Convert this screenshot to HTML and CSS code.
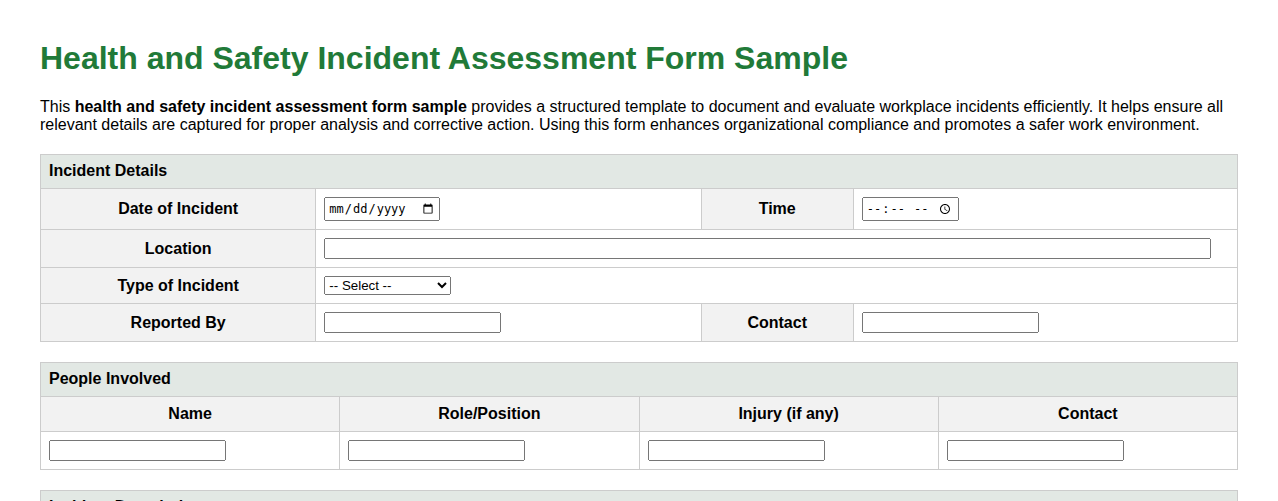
FILE: index.html
```html
<!DOCTYPE html>
<html lang="en">
  <head>
    <meta charset="UTF-8" />
    <meta name="viewport" content="width=device-width, initial-scale=1.0" />
    <title>Health and Safety Incident Assessment Form Sample</title>
    <link rel="stylesheet" href="styles.css">
  </head>
  <body>
    <h1 class="title">Health and Safety Incident Assessment Form Sample</h1>

    <p class="intro">
      This <strong>health and safety incident assessment form sample</strong> provides a structured template to document and evaluate workplace incidents efficiently. It helps ensure all relevant details are captured for proper analysis and corrective action. Using this form enhances organizational compliance and promotes a safer work environment.
    </p>

    <table class="form-table details">
      <colgroup>
        <col class="c-label" />
        <col class="c-value" />
        <col class="c-label2" />
        <col />
      </colgroup>
      <tr>
        <th class="section" colspan="4">Incident Details</th>
      </tr>
      <tr>
        <th>Date of Incident</th>
        <td><input type="date" class="date" /></td>
        <th>Time</th>
        <td><input type="time" class="time" /></td>
      </tr>
      <tr>
        <th>Location</th>
        <td colspan="3"><input type="text" class="wide" /></td>
      </tr>
      <tr>
        <th>Type of Incident</th>
        <td colspan="3">
          <select>
            <option>-- Select --</option>
            <option>Injury</option>
            <option>Near Miss</option>
            <option>Property Damage</option>
            <option>Environmental</option>
          </select>
        </td>
      </tr>
      <tr>
        <th>Reported By</th>
        <td><input type="text" /></td>
        <th>Contact</th>
        <td><input type="text" /></td>
      </tr>
    </table>

    <table class="form-table people">
      <tr>
        <th class="section" colspan="4">People Involved</th>
      </tr>
      <tr>
        <th>Name</th>
        <th>Role/Position</th>
        <th>Injury (if any)</th>
        <th>Contact</th>
      </tr>
      <tr>
        <td><input type="text" /></td>
        <td><input type="text" /></td>
        <td><input type="text" /></td>
        <td><input type="text" /></td>
      </tr>
    </table>

    <table class="form-table">
      <tr>
        <th class="section">Incident Description</th>
      </tr>
      <tr>
        <td><textarea rows="4"></textarea></td>
      </tr>
    </table>
  </body>
</html>
```

FILE: styles.css
```css
:root {
  --green: #217a38;
  --section: #e2e8e4;
  --label: #f2f2f2;
  --line: #cccccc;
}

body {
  margin: 0;
  padding: 20px 40px;
  font-family: "Liberation Sans", Arial, sans-serif;
  font-size: 16px;
  color: #000;
}

.title {
  color: var(--green);
  font-size: 32px;
  margin: 20px 0 21px;
}

.intro {
  margin: 0 0 20px;
  line-height: 18px;
}

.form-table {
  width: 100%;
  border-collapse: collapse;
  margin-bottom: 20px;
}

.form-table th,
.form-table td {
  border: 1px solid var(--line);
  padding: 8px;
}

.form-table th {
  background: var(--label);
  text-align: center;
}

.form-table th.section {
  background: var(--section);
  text-align: left;
  padding: 7px 8px 8px;
}

.details {
  table-layout: fixed;
}

.c-label {
  width: 23%;
}

.c-value {
  width: 32.2%;
}

.c-label2 {
  width: 12.7%;
}

.people th,
.people td {
  width: 25%;
}

input[type="text"],
input.date,
input.time {
  box-sizing: border-box;
  width: 177px;
  height: 21px;
}

input.date,
input.time {
  width: 116px;
  height: 24px;
  padding: 0 2px;
  font-size: 12px;
}

input.time {
  width: 97px;
}

input.wide {
  width: 98%;
}

textarea {
  width: 98%;
}
```
